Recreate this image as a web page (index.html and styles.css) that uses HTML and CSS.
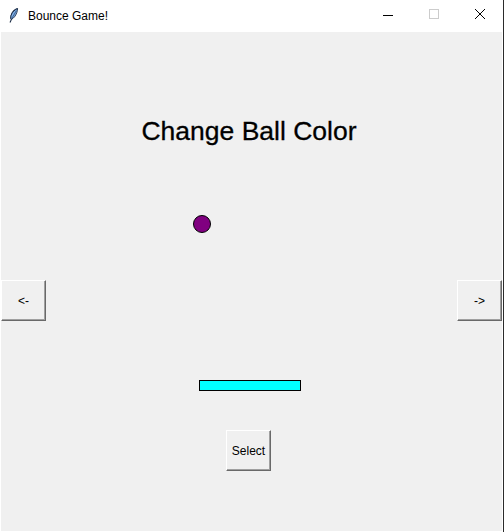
FILE: index.html
```html
<!DOCTYPE html>
<html>
<head>
<meta charset="utf-8">
<link rel="stylesheet" href="styles.css">
</head>
<body>
<div class="window">
  <div class="titlebar">
    <svg class="app-icon" width="10" height="15" viewBox="0 0 10 15">
      <path d="M8.6 0.6 C6.2 1.4 3.2 4 2.2 7.2 C1.6 9 1.8 10.6 2.4 11.4 L1 14.4" fill="none" stroke="#1a2a44" stroke-width="1.1"/>
      <path d="M8.6 0.6 C6.2 1.4 3.2 4 2.2 7.2 C1.6 9 1.8 10.6 2.4 11.4 C4.6 10.4 6.8 7.6 7.8 4.6 C8.3 3 8.6 1.6 8.6 0.6 Z" fill="#7fb0e6" stroke="#1a2a44" stroke-width="0.9"/>
      <path d="M7.4 2.6 L3 10.2" stroke="#24406e" stroke-width="0.7"/>
    </svg>
    <span class="title-text">Bounce Game!</span>
    <div class="controls">
      <svg class="ctl" width="46" height="32" viewBox="0 0 46 32"><path d="M18 15.5 H28" stroke="#000" stroke-width="1"/></svg>
      <svg class="ctl" width="46" height="32" viewBox="0 0 46 32"><rect x="18.5" y="9.5" width="9" height="9" fill="none" stroke="#cccccc" stroke-width="1"/></svg>
      <svg class="ctl" width="46" height="32" viewBox="0 0 46 32"><path d="M18 9 L28 19 M28 9 L18 19" stroke="#000" stroke-width="1"/></svg>
    </div>
  </div>
  <div class="body-row">
    <div class="client">
      <div class="heading">Change Ball Color</div>
      <div class="ball"></div>
      <div class="paddle"></div>
      <div class="nav-row">
        <button class="tk-btn">&lt;-</button>
        <button class="tk-btn">-&gt;</button>
      </div>
      <button class="tk-btn select-btn">Select</button>
    </div>
    <div class="edge"></div>
  </div>
</div>
</body>
</html>
```
FILE: styles.css
```css
html, body {
  margin: 0;
  padding: 0;
  background: #ffffff;
}
body {
  width: 504px;
  height: 532px;
  overflow: hidden;
  font-family: "Liberation Sans", Arial, sans-serif;
}
.window {
  display: flex;
  flex-direction: column;
  width: 504px;
  height: 532px;
}
.titlebar {
  height: 32px;
  display: flex;
  align-items: center;
  background: #ffffff;
  border-right: 1px solid #2b2b2b;
  box-sizing: border-box;
}
.app-icon {
  margin-left: 9px;
  margin-top: -1px;
}
.title-text {
  margin-left: 9px;
  font-size: 12px;
  color: #000;
  margin-top: -1px;
}
.controls {
  margin-left: auto;
  display: flex;
  margin-right: 0;
}
.ctl {
  display: block;
}
.heading {
  margin-top: 84px;
  height: 30px;
  line-height: 30px;
  text-align: center;
  font-size: 26.5px;
  color: #000;
  padding-right: 5px;
  -webkit-text-stroke: 0.3px #000;
}
.body-row {
  flex: 1;
  display: flex;
}
.client {
  position: relative;
  margin-left: 1px;
  width: 501px;
  height: 499px;
  background: #f0f0f0;
  display: flex;
  flex-direction: column;
}
.edge {
  width: 1px;
  margin-left: 1px;
  background: #2b2b2b;
}
.ball {
  position: absolute;
  left: 192px;
  top: 183px;
  width: 16px;
  height: 16px;
  border-radius: 50%;
  background: #800080;
  border: 1px solid #000;
}
.paddle {
  position: absolute;
  left: 198px;
  top: 348px;
  width: 100px;
  height: 9px;
  background: #00ffff;
  border: 1px solid #000;
}
.nav-row {
  margin-top: 134px;
  display: flex;
  justify-content: space-between;
}
.tk-btn {
  box-sizing: border-box;
  width: 45px;
  height: 41px;
  margin: 0;
  padding: 0;
  background: #f0f0f0;
  border-style: solid;
  border-width: 1px;
  border-color: #ffffff #696969 #696969 #ffffff;
  box-shadow: inset -1px -1px 0 #a0a0a0;
  font-family: "Liberation Sans", Arial, sans-serif;
  font-size: 12px;
  color: #000;
}
.select-btn {
  margin-top: 109px;
  margin-left: 225px;
}
```
